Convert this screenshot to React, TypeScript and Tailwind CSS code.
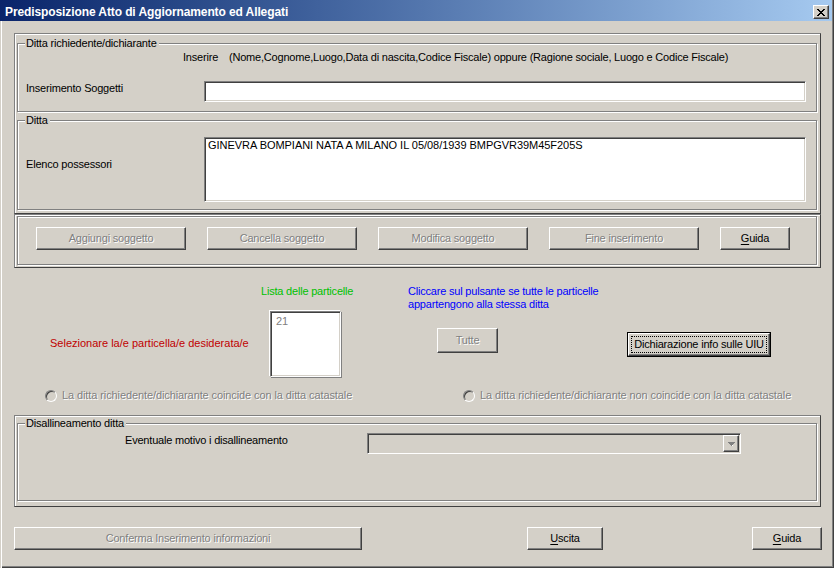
import React from 'react';

const raised =
  'border border-t-white border-l-white border-b-[#404040] border-r-[#404040] shadow-[inset_-1px_-1px_0_#808080]';
const sunken =
  'border border-t-[#808080] border-l-[#808080] border-b-white border-r-white shadow-[inset_1px_1px_0_#404040,inset_-1px_-1px_0_#d4d0c8]';
const panel =
  'w-[807px] border border-t-[#808080] border-l-[#808080] border-b-[#404040] border-r-[#404040] shadow-[inset_1px_1px_0_#fff]';
const disabledText = 'text-[#808080] [text-shadow:1px_1px_0_#fff]';

function Btn({
  children,
  className,
  disabled,
}: {
  children: React.ReactNode;
  className: string;
  disabled?: boolean;
}) {
  return (
    <button
      type="button"
      className={`${raised} bg-[#d4d0c8] flex items-center justify-center shrink-0 ${
        disabled ? disabledText : 'text-black'
      } ${className}`}
    >
      {children}
    </button>
  );
}

function Group({
  label,
  className,
  children,
}: {
  label: string;
  className: string;
  children?: React.ReactNode;
}) {
  return (
    <div
      className={`relative w-[800px] border border-[#808080] shadow-[inset_1px_1px_0_#fff,1px_1px_0_#fff] ${className}`}
    >
      <span className="absolute left-[7px] top-[-7px] bg-[#d4d0c8] pl-[1px] pr-[2px] leading-[13px] whitespace-nowrap">
        {label}
      </span>
      {children}
    </div>
  );
}

function Radio({ label }: { label: string }) {
  return (
    <div className="flex items-center h-[13px]">
      <div className="w-[12px] h-[12px] rounded-full border border-t-[#808080] border-l-[#808080] border-b-white border-r-white bg-[#d4d0c8] shadow-[inset_1px_1px_0_#404040]" />
      <span className={`ml-[5px] whitespace-nowrap tracking-[-0.1px] ${disabledText}`}>{label}</span>
    </div>
  );
}

function CloseGlyph() {
  const rows = [
    [0, 1, 6, 7],
    [1, 2, 5, 6],
    [2, 3, 4, 5],
    [3, 4],
    [2, 3, 4, 5],
    [1, 2, 5, 6],
    [0, 1, 6, 7],
  ];
  return (
    <svg width="8" height="7" viewBox="0 0 8 7" shapeRendering="crispEdges">
      {rows.map((cols, y) =>
        cols.map((x) => <rect key={`${x}-${y}`} x={x} y={y} width="1" height="1" fill="#000" />)
      )}
    </svg>
  );
}

export default function App() {
  return (
    <div className="w-[834px] h-[568px] bg-[#d4d0c8] flex flex-col overflow-hidden font-['Liberation_Sans',Arial,sans-serif] text-[11px] leading-[13px] tracking-[-0.2px] text-black shadow-[inset_1px_0_0_#d4d0c8,inset_2px_0_0_#fff,inset_-1px_-1px_0_#404040,inset_-2px_-2px_0_#808080]">
      {/* title bar */}
      <div className="h-[21px] w-[832px] shrink-0 bg-gradient-to-r from-[#0a246a] to-[#a6caf0] flex items-start justify-between pt-[5px] pl-[5px] pr-[3px]">
        <span className="text-white font-bold text-[12px] leading-[14px] tracking-[-0.1px] whitespace-nowrap">
          Predisposizione Atto di Aggiornamento ed Allegati
        </span>
        <div className={`${raised} w-[16px] h-[14px] bg-[#d4d0c8] flex items-center justify-center`}>
          <CloseGlyph />
        </div>
      </div>

      <div className="pl-[14px] flex flex-col">
        {/* panel 1 */}
        <div className={`${panel} h-[181px] mt-[12px] pt-[9px] pl-[2px]`}>
          <Group label="Ditta richiedente/dichiarante" className="h-[69px] pt-[7px]">
            <div className="flex pl-[165px] whitespace-nowrap">
              <span className="w-[46px]">Inserire</span>
              <span>
                (Nome,Cognome,Luogo,Data di nascita,Codice Fiscale) oppure (Ragione sociale, Luogo e Codice Fiscale)
              </span>
            </div>
            <div className="flex items-start mt-[17px]">
              <span className="w-[186px] pl-[8px] mt-[1px] whitespace-nowrap">Inserimento Soggetti</span>
              <div className={`${sunken} w-[602px] h-[21px] bg-white`} />
            </div>
          </Group>
          <Group label="Ditta" className="h-[90px] mt-[8px] pt-[16px]">
            <div className="flex items-start">
              <span className="w-[186px] pl-[8px] mt-[21px] whitespace-nowrap">Elenco possessori</span>
              <div className={`${sunken} w-[602px] h-[65px] bg-white pl-[3px] pt-[1px] tracking-[-0.04px] whitespace-nowrap`}>
                GINEVRA BOMPIANI NATA A MILANO IL 05/08/1939 BMPGVR39M45F205S
              </div>
            </div>
          </Group>
        </div>

        {/* panel 2: buttons */}
        <div className={`${panel} h-[54px] pt-[1px] pl-[2px]`}>
          <div className="w-[800px] h-[49px] border border-[#808080] shadow-[inset_1px_1px_0_#fff,1px_1px_0_#fff] pt-[10px] pl-[18px] flex gap-[21px]">
            <Btn disabled className="w-[150px] h-[23px]">Aggiungi soggetto</Btn>
            <Btn disabled className="w-[150px] h-[23px]">Cancella soggetto</Btn>
            <Btn disabled className="w-[150px] h-[23px]">Modifica soggetto</Btn>
            <Btn disabled className="w-[150px] h-[23px]">Fine inserimento</Btn>
            <Btn className="w-[70px] h-[23px]">
              <span className="underline underline-offset-[2px]">G</span>uida
            </Btn>
          </div>
        </div>

        {/* middle area */}
        <div className="h-[121px] flex items-start">
          <div className="w-[247px] pl-[36px] mt-[69px] text-[#c00000] tracking-[0px] whitespace-nowrap">
            Selezionare la/e particella/e desiderata/e
          </div>
          <div className="w-[147px] mt-[17px] flex flex-col">
            <span className="text-[#00c000] whitespace-nowrap">Lista delle particelle</span>
            <div className="ml-[9px] mt-[13px] w-[71px] h-[66px] bg-white border border-t-[#808080] border-l-[#808080] border-b-white border-r-white shadow-[inset_1px_1px_0_#404040,inset_-1px_-1px_0_#d4d0c8,-1px_-1px_0_#fff,1px_1px_0_#808080] pl-[5px] pt-[3px] text-[#808080]">
              21
            </div>
          </div>
          <div className="w-[219px] mt-[17px] flex flex-col">
            <span className="text-[#0000ff] whitespace-nowrap">Cliccare sul pulsante se tutte le particelle</span>
            <span className="text-[#0000ff] whitespace-nowrap">appartengono alla stessa ditta</span>
            <Btn disabled className="ml-[29px] mt-[17px] w-[61px] h-[25px]">Tutte</Btn>
          </div>
          <div className="mt-[64px] w-[144px] h-[25px] border border-black flex">
            <div className="flex-1 border border-t-white border-l-white border-b-[#404040] border-r-[#404040] shadow-[inset_-1px_-1px_0_#808080] bg-[#d4d0c8] flex items-center justify-center p-[2px]">
              <span className="flex-1 h-full border border-dotted border-black flex items-center justify-center whitespace-nowrap">
                Dichiarazione info sulle UIU
              </span>
            </div>
          </div>
        </div>

        {/* radios */}
        <div className="flex items-center h-[13px] pl-[31px]">
          <div className="w-[418px]">
            <Radio label="La ditta richiedente/dichiarante coincide con la ditta catastale" />
          </div>
          <Radio label="La ditta richiedente/dichiarante non coincide con la ditta catastale" />
        </div>

        {/* panel 3 */}
        <div className={`${panel} h-[92px] mt-[13px] pt-[7px] pl-[2px]`}>
          <Group label="Disallineamento ditta" className="h-[78px] pt-[9px]">
            <div className="flex items-start">
              <span className="w-[349px] pl-[107px] mt-[1px] whitespace-nowrap">Eventuale motivo i disallineamento</span>
              <div className={`${sunken} w-[374px] h-[21px] bg-[#d4d0c8] flex justify-end items-center pr-[1px]`}>
                <div className={`${raised} w-[16px] h-[17px] bg-[#d4d0c8] flex items-center justify-center`}>
                  <svg width="7" height="4" viewBox="0 0 7 4" shapeRendering="crispEdges">
                    <rect x="0" y="0" width="7" height="1" fill="#808080" />
                    <rect x="1" y="1" width="5" height="1" fill="#808080" />
                    <rect x="2" y="2" width="3" height="1" fill="#808080" />
                    <rect x="3" y="3" width="1" height="1" fill="#808080" />
                    <rect x="4" y="3" width="1" height="1" fill="#fff" />
                  </svg>
                </div>
              </div>
            </div>
          </Group>
        </div>

        {/* bottom buttons */}
        <div className="flex mt-[20px]">
          <Btn disabled className="w-[348px] h-[23px]">Conferma Inserimento informazioni</Btn>
          <Btn className="ml-[165px] w-[76px] h-[23px]">
            <span className="underline underline-offset-[2px]">U</span>scita
          </Btn>
          <Btn className="ml-[149px] w-[70px] h-[23px]">
            <span className="underline underline-offset-[2px]">G</span>uida
          </Btn>
        </div>
      </div>
    </div>
  );
}
